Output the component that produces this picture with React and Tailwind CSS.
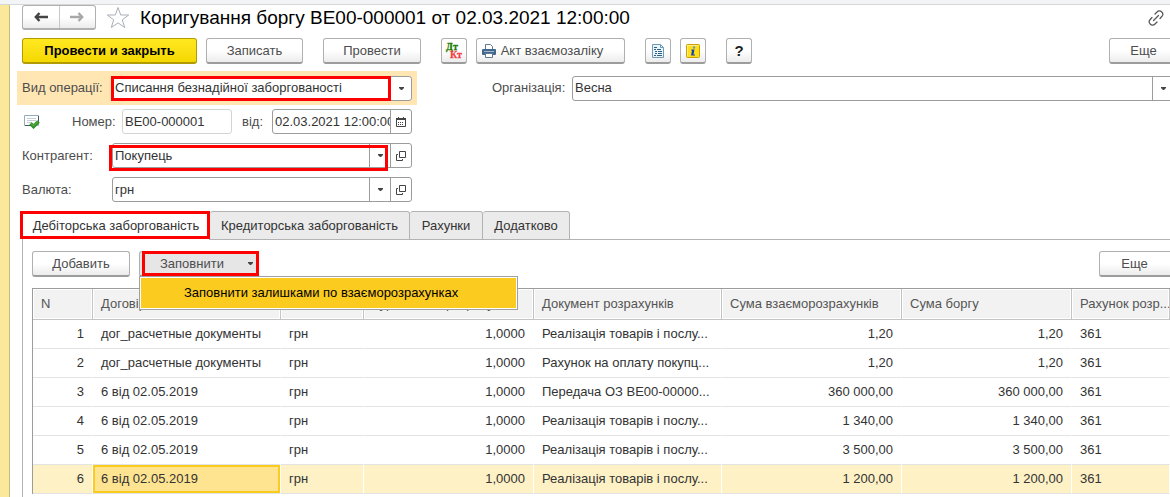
import React from 'react';

const COLUMNS = [
  { title: 'N', width: 'w-[60px]' },
  { title: 'Договір', width: 'w-[188px]' },
  { title: 'Валюта', width: 'w-[83px]' },
  { title: 'Курс взаєморозрахунків', width: 'w-[170px]', right: true },
  { title: 'Документ розрахунків', width: 'w-[188px]' },
  { title: 'Сума взаєморозрахунків', width: 'w-[180px]', right: true },
  { title: 'Сума боргу', width: 'w-[170px]', right: true },
  { title: 'Рахунок розр...', width: '' },
];

const ROWS = [
  ['1', 'дог_расчетные документы', 'грн', '1,0000', 'Реалізація товарів і послу...', '1,20', '1,20', '361'],
  ['2', 'дог_расчетные документы', 'грн', '1,0000', 'Рахунок на оплату покупц...', '1,20', '1,20', '361'],
  ['3', '6 від 02.05.2019', 'грн', '1,0000', 'Передача ОЗ ВЕ00-00000...', '360 000,00', '360 000,00', '361'],
  ['4', '6 від 02.05.2019', 'грн', '1,0000', 'Реалізація товарів і послу...', '1 340,00', '1 340,00', '361'],
  ['5', '6 від 02.05.2019', 'грн', '1,0000', 'Реалізація товарів і послу...', '3 500,00', '3 500,00', '361'],
  ['6', '6 від 02.05.2019', 'грн', '1,0000', 'Реалізація товарів і послу...', '1 200,00', '1 200,00', '361'],
];

const TABS = [
  { title: 'Дебіторська заборгованість', width: 'w-[188px]' },
  { title: 'Кредиторська заборгованість', width: 'w-[200px]' },
  { title: 'Рахунки', width: 'w-[73px]' },
  { title: 'Додатково', width: 'w-[87px]' },
];

function Button({ className = '', pressed = false, children, ...rest }) {
  return (
    <button
      type="button"
      className={`flex h-[26px] shrink-0 items-center justify-center rounded-[3px] border border-[#b0b0b0] border-b-2 border-b-[#9c9c9c] text-[#4d4d4d] ${
        pressed ? 'bg-[#e6e6e6]' : 'bg-gradient-to-b from-white from-50% to-[#ececec]'
      } ${className}`}
      {...rest}
    >
      {children}
    </button>
  );
}

function Caret() {
  return (
    <svg width="5" height="3" viewBox="0 0 5 3" fill="#444" aria-hidden="true">
      <path d="M0 0h5v1L3 3H2L0 1z" />
    </svg>
  );
}

function OpenIcon() {
  return (
    <svg width="10" height="10" viewBox="0 0 10 10" fill="none" stroke="#444" aria-hidden="true">
      <path d="M3.5 .5h6v6h-6z" />
      <path d="M2 3.5H.5v6h6V8" />
    </svg>
  );
}

function CalendarIcon() {
  return (
    <svg width="10" height="10" viewBox="0 0 10 10" fill="none" stroke="#444" aria-hidden="true">
      <path d="M.5 2.5h9v7h-9z" />
      <path d="M0 2h10" strokeWidth="2" />
      <path d="M2.5 0v2M7.5 0v2" />
      <path d="M2 5.5h6M2 7.5h6" strokeDasharray="1 1" />
    </svg>
  );
}

function Highlight({ className }) {
  return <span className={`pointer-events-none absolute border-3 border-[#fe0000] ${className}`} />;
}

function Field({ id, value, className = '', border = 'border-[#9c9c9c]', children }) {
  return (
    <div className={`relative flex h-[25px] rounded-[3px] border bg-white ${border} ${className}`}>
      <input id={id} defaultValue={value} className="min-w-0 flex-1 bg-transparent pl-0.5 text-[#333] outline-none" />
      {children}
    </div>
  );
}

function FieldButton({ label, children }) {
  return (
    <button type="button" aria-label={label} className="flex w-[21px] shrink-0 items-center justify-center border-l border-[#9c9c9c]">
      {children}
    </button>
  );
}

function TitleBar() {
  return (
    <div className="flex h-[25px] items-center">
      <div className="flex h-[25px] w-[74px] shrink-0 rounded-[3px] border border-[#b0b0b0] border-b-2 bg-gradient-to-b from-white from-50% to-[#ececec]">
        <button type="button" aria-label="Назад" className="flex flex-1 items-center justify-center border-r border-[#c8c8c8]">
          <svg width="14" height="10" viewBox="0 0 14 10" fill="none" stroke="#444" strokeWidth="2.4">
            <path d="M1.500 5H14M5.500 1L1.800 5l3.700 4" />
          </svg>
        </button>
        <button type="button" aria-label="Вперед" className="flex flex-1 items-center justify-center">
          <svg width="14" height="10" viewBox="0 0 14 10" fill="none" stroke="#a8a8a8" strokeWidth="2.4">
            <path d="M0 5h12.500M8.500 1l3.700 4-3.700 4" />
          </svg>
        </button>
      </div>
      <button type="button" aria-label="Додати в обране" className="ml-2.5 flex w-6 shrink-0 justify-center">
        <svg width="24" height="23" viewBox="0 0 24 23" fill="none" stroke="#a9afb8">
          <path d="M12 1.500l2.700 7.500h8l-6.400 4.800 2.400 7.700L12 16.900l-6.700 4.600 2.400-7.700L1.300 9h8z" />
        </svg>
      </button>
      <h1 className="ml-2.5 text-[19px] leading-6 whitespace-nowrap text-black">
        Коригування боргу ВЕ00-000001 от 02.03.2021 12:00:00
      </h1>
      <button type="button" aria-label="Посилання" className="mr-1.5 ml-auto">
        <svg width="16" height="16" viewBox="0 0 16 16" fill="none" stroke="#555" strokeWidth="1.200" strokeLinecap="round">
          <path d="M7 4l2-2a3.200 3.200 0 0 1 4.800 0 3.200 3.200 0 0 1 0 4.500L12 8.500" />
          <path d="M9 12l-2 2a3.200 3.200 0 0 1-4.800 0 3.200 3.200 0 0 1 0-4.500L4 7.500" />
          <path d="M5.500 10.500l5-5" />
        </svg>
      </button>
    </div>
  );
}

function Toolbar() {
  return (
    <div className="mt-2 flex">
      <button
        type="button"
        className="h-[26px] w-[175px] shrink-0 rounded-[3px] border border-[#b09c00] border-b-2 bg-gradient-to-b from-[#ffe91f] to-[#f5d800] font-bold text-black"
      >
        Провести и закрыть
      </button>
      <Button className="ml-[9px] w-[97px]">Записать</Button>
      <Button className="ml-5 w-[98px]">Провести</Button>
      <Button className="ml-5 w-[26px]" aria-label="Дт Кт">
        <svg width="18" height="18" viewBox="0 0 18 18" fontFamily="Liberation Serif, serif" fontWeight="bold" fontSize="10">
          <text x="1" y="8" fill="#1c7c00" stroke="#1c7c00" strokeWidth=".3">Дт</text>
          <text x="5" y="16" fill="#f04040" stroke="#f04040" strokeWidth=".3">Кт</text>
        </svg>
      </Button>
      <Button className="ml-[9px] w-[149px] pr-4">
        <svg width="14" height="14" viewBox="0 0 14 14" className="mr-[5px]" aria-hidden="true">
          <path d="M3.500 6V.5h5l2 2V6" fill="#fff" stroke="#60798f" />
          <rect x="0" y="5" width="14" height="6" rx="1" fill="#41678c" />
          <path d="M2 7.500h10" stroke="#9db8d0" />
          <path d="M3.500 9.500h7v4h-7z" fill="#fff" stroke="#60798f" />
        </svg>
        Акт взаємозаліку
      </Button>
      <Button className="ml-5 w-[26px]" aria-label="Звіт">
        <svg width="12" height="14" viewBox="0 0 12 14" fill="none">
          <path d="M.5.5h8l3 3v10H.5z" fill="#e9f5fb" stroke="#6f9ab5" />
          <path d="M8.500.5v3h3" stroke="#6f9ab5" />
          <path d="M2 3.500h3M2 5.500h2M5 5.500h4M3 7.500h2M6 7.500h4M3 9.500h2M6 9.500h4M2 11.500h2M5 11.500h5" stroke="#2f5f80" />
        </svg>
      </Button>
      <Button className="ml-[9px] w-[26px]" aria-label="Інформація">
        <svg width="14" height="14" viewBox="0 0 14 14">
          <rect x=".5" y=".5" width="13" height="13" rx="1" fill="#ffdf1c" stroke="#c9a000" />
          <path d="M1.500 12V1.500H12" fill="none" stroke="#fff08a" />
          <circle cx="8" cy="3.500" r="1.300" fill="#7f92b8" />
          <path d="M5.500 5.500h3l-1 5h1.500v1h-4l1-5h-1z" fill="#1440b0" />
        </svg>
      </Button>
      <Button className="ml-5 w-[26px]" aria-label="Довідка">
        <span className="text-[15px] font-bold text-[#222]">?</span>
      </Button>
      <Button className="-mr-7 ml-auto w-[89px] pr-5">Еще</Button>
    </div>
  );
}

function HeaderFields() {
  return (
    <div className="text-[#4d4d4d]">
      <div className="mt-[7px] flex items-center">
        <div className="-ml-[5px] flex h-[34px] w-[400px] shrink-0 items-center bg-[#ffe6b3] pl-[5px]">
          <label htmlFor="operation" className="w-[90px] shrink-0">Вид операції:</label>
          <Field id="operation" value="Списання безнадійної заборгованості" className="w-[300px]">
            <FieldButton label="Вибрати вид операції"><Caret /></FieldButton>
            <Highlight className="-inset-y-px right-5 -left-0.5" />
          </Field>
        </div>
        <label htmlFor="organization" className="ml-[75px] w-20 shrink-0">Організація:</label>
        <Field id="organization" value="Весна" className="-mr-1 flex-1">
          <FieldButton label="Вибрати організацію"><Caret /></FieldButton>
        </Field>
      </div>

      <div className="mt-1 flex items-center">
        <svg width="18" height="14" viewBox="0 0 18 14" fill="none" className="ml-0.5 shrink-0" aria-hidden="true">
          <path d="M.5.5h14v10H.5z" fill="#fff" stroke="#9aabb8" />
          <path d="M14.500 1v6M1 10.500h6" stroke="#3d5a70" />
          <path d="M3 3.500h9M3 5.500h9M3 7.500h5" stroke="#c3ced6" />
          <path d="M6.500 8.500l3 3 5-5" stroke="#2f8f2a" strokeWidth="3.600" />
          <path d="M7 8.500l2.500 2.500 4.500-4.500" stroke="#6cc04a" />
        </svg>
        <label htmlFor="number" className="ml-[30px] w-[50px] shrink-0">Номер:</label>
        <Field id="number" value="ВЕ00-000001" className="w-[110px]" border="border-[#d4d4d4]" />
        <label htmlFor="date" className="ml-2.5 w-[30px] shrink-0">від:</label>
        <Field id="date" value="02.03.2021 12:00:00" className="w-[140px]">
          <FieldButton label="Календар"><CalendarIcon /></FieldButton>
        </Field>
      </div>

      <div className="mt-[9px] flex items-center">
        <label htmlFor="partner" className="w-[90px] shrink-0">Контрагент:</label>
        <Field id="partner" value="Покупець" className="w-[300px]">
          <FieldButton label="Вибрати контрагента"><Caret /></FieldButton>
          <FieldButton label="Відкрити контрагента"><OpenIcon /></FieldButton>
          <Highlight className="top-px right-[23px] -bottom-1 -left-1" />
        </Field>
      </div>

      <div className="mt-[9px] flex items-center">
        <label htmlFor="currency" className="w-[90px] shrink-0">Валюта:</label>
        <Field id="currency" value="грн" className="w-[300px]">
          <FieldButton label="Вибрати валюту"><Caret /></FieldButton>
          <FieldButton label="Відкрити валюту"><OpenIcon /></FieldButton>
        </Field>
      </div>
    </div>
  );
}

function Tabs() {
  return (
    <div role="tablist" className="mt-[9px] flex h-[29px]">
      {TABS.map((tab, i) => (
        <button
          key={tab.title}
          type="button"
          role="tab"
          aria-selected={i === 0}
          className={`relative shrink-0 rounded-t-[3px] border-t border-r border-[#b3b3b3] whitespace-nowrap text-[#333] ${tab.width} ${
            i === 0 ? 'border-l bg-white' : 'border-b bg-[#ebebeb]'
          }`}
        >
          {tab.title}
          {i === 0 && <Highlight className="-top-px -right-px bottom-px -left-[3px]" />}
        </button>
      ))}
      <div className="flex-1 border-b border-[#b3b3b3]" />
    </div>
  );
}

function DebtTable() {
  return (
    <table className="mt-[11px] w-full table-fixed border-separate border-spacing-0 border-t border-l border-[#9c9c9c] text-[#333]">
      <thead>
        <tr>
          {COLUMNS.map((col) => (
            <th
              key={col.title}
              className={`h-[31px] overflow-hidden border-r border-b border-[#c4c4c4] bg-[#f2f2f2] pl-2 text-left font-normal whitespace-nowrap text-[#555] shadow-[inset_0_0_0_1px_#fff] ${col.width}`}
            >
              {col.title}
            </th>
          ))}
        </tr>
      </thead>
      <tbody>
        {ROWS.map((row, r) => {
          const selected = r === ROWS.length - 1;
          return (
            <tr key={row[0]}>
              {row.map((cell, c) => (
                <td
                  key={c}
                  className={`h-[29px] truncate border-r border-b border-b-[#e3e3e3] px-2 ${c === 0 || COLUMNS[c].right ? 'text-right' : ''} ${
                    selected && c === 1
                      ? 'border-r-white bg-[#fee491] shadow-[inset_0_0_0_2px_#fbcb20]'
                      : selected
                        ? 'border-r-white bg-[#fef1c6]'
                        : 'border-r-transparent'
                  }`}
                >
                  {cell}
                </td>
              ))}
            </tr>
          );
        })}
      </tbody>
    </table>
  );
}

export default function App() {
  return (
    <div className="min-h-screen overflow-hidden bg-white font-['Liberation_Sans',Arial,sans-serif] text-[13px] leading-4">
      <div className="h-[5px] border-b border-[#d5d7da] bg-[#f2f4f6]" />
      <div className="flex">
        <div className="w-2.5 shrink-0 border-r border-[#c9bb78] bg-[#fbe99b]" />
        <main className="min-w-0 flex-1 pl-3">
          <TitleBar />
          <Toolbar />
          <HeaderFields />
          <Tabs />
          <section className="border-l border-[#b3b3b3] pt-[11px] pb-3 pl-[9px]">
            <div className="flex">
              <Button className="w-[98px]">Добавить</Button>
              <div className="relative ml-[9px]">
                <Button pressed className="w-[120px] pr-[5px] pl-5" aria-haspopup="menu">
                  <span className="flex-1 text-left">Заповнити</span>
                  <Caret />
                </Button>
                <Highlight className="top-0 right-0 bottom-px left-[3px]" />
                <div role="menu" className="absolute top-[25px] left-0 z-10 border border-[#a0a0a0] bg-white p-px">
                  <button type="button" role="menuitem" className="h-[30px] w-[375px] bg-[#fbcb20] pl-[43px] text-left whitespace-nowrap text-black">
                    Заповнити залишками по взаєморозрахунках
                  </button>
                </div>
              </div>
              <Button className="-mr-5 ml-auto w-[91px] pr-5">Еще</Button>
            </div>
            <DebtTable />
          </section>
        </main>
      </div>
    </div>
  );
}
